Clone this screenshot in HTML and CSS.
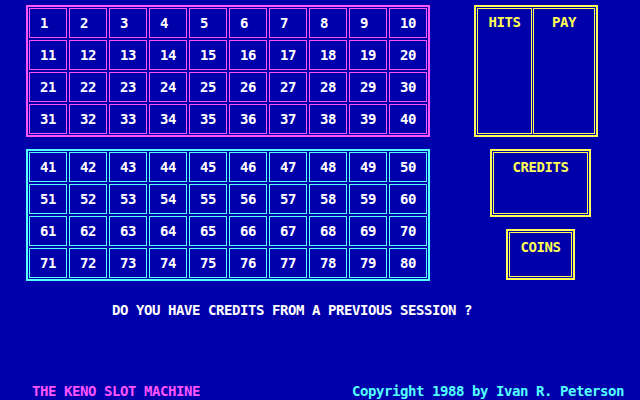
FILE: index.html
```html
<!DOCTYPE html>
<html>
<head>
<meta charset="utf-8">
<link rel="stylesheet" href="styles.css">
</head>
<body>
<div class="screen">
  <div class="top">
    <div class="boards">
      <div class="board board-pink">
        <div class="cell">1</div><div class="cell">2</div><div class="cell">3</div><div class="cell">4</div><div class="cell">5</div><div class="cell">6</div><div class="cell">7</div><div class="cell">8</div><div class="cell">9</div><div class="cell">10</div>
        <div class="cell">11</div><div class="cell">12</div><div class="cell">13</div><div class="cell">14</div><div class="cell">15</div><div class="cell">16</div><div class="cell">17</div><div class="cell">18</div><div class="cell">19</div><div class="cell">20</div>
        <div class="cell">21</div><div class="cell">22</div><div class="cell">23</div><div class="cell">24</div><div class="cell">25</div><div class="cell">26</div><div class="cell">27</div><div class="cell">28</div><div class="cell">29</div><div class="cell">30</div>
        <div class="cell">31</div><div class="cell">32</div><div class="cell">33</div><div class="cell">34</div><div class="cell">35</div><div class="cell">36</div><div class="cell">37</div><div class="cell">38</div><div class="cell">39</div><div class="cell">40</div>
      </div>
      <div class="board board-cyan">
        <div class="cell">41</div><div class="cell">42</div><div class="cell">43</div><div class="cell">44</div><div class="cell">45</div><div class="cell">46</div><div class="cell">47</div><div class="cell">48</div><div class="cell">49</div><div class="cell">50</div>
        <div class="cell">51</div><div class="cell">52</div><div class="cell">53</div><div class="cell">54</div><div class="cell">55</div><div class="cell">56</div><div class="cell">57</div><div class="cell">58</div><div class="cell">59</div><div class="cell">60</div>
        <div class="cell">61</div><div class="cell">62</div><div class="cell">63</div><div class="cell">64</div><div class="cell">65</div><div class="cell">66</div><div class="cell">67</div><div class="cell">68</div><div class="cell">69</div><div class="cell">70</div>
        <div class="cell">71</div><div class="cell">72</div><div class="cell">73</div><div class="cell">74</div><div class="cell">75</div><div class="cell">76</div><div class="cell">77</div><div class="cell">78</div><div class="cell">79</div><div class="cell">80</div>
      </div>
    </div>
    <div class="side">
      <div class="box hits-box">
        <div class="inner hits">HITS</div>
        <div class="inner pay">PAY</div>
      </div>
      <div class="box credits-box">
        <div class="inner">CREDITS</div>
      </div>
      <div class="box coins-box">
        <div class="inner">COINS</div>
      </div>
    </div>
  </div>
  <div class="question">DO YOU HAVE CREDITS FROM A PREVIOUS SESSION ?</div>
  <div class="footer">
    <span class="title">THE KENO SLOT MACHINE</span>
    <span class="copyright">Copyright 1988 by Ivan R. Peterson</span>
  </div>
</div>
</body>
</html>
```
FILE: styles.css
```css
html, body {
  margin: 0;
  padding: 0;
  background: #0000aa;
}
.screen {
  width: 640px;
  height: 400px;
  display: flex;
  flex-direction: column;
  font-family: "DejaVu Sans Mono", "Liberation Mono", monospace;
  font-weight: bold;
  font-size: 14px;
  letter-spacing: -0.43px;
  line-height: 16px;
  color: #ffffff;
  overflow: hidden;
}
.top {
  display: flex;
  padding: 5px 0 0 26px;
}
.boards {
  display: flex;
  flex-direction: column;
  gap: 12px;
}
.board {
  display: grid;
  grid-template-columns: repeat(10, 38px);
  grid-auto-rows: 30px;
  gap: 2px;
  padding: 1px;
  border: 2px solid;
}
.board-pink { border-color: #ff55ff; }
.board-cyan { border-color: #55ffff; }
.cell {
  border: 1px solid;
  display: flex;
  align-items: center;
  padding-left: 10px;
  color: #ffffff;
}
.board-pink .cell { border-color: #ff55ff; }
.board-cyan .cell { border-color: #55ffff; }
.side {
  display: flex;
  flex-direction: column;
  margin-left: 44px;
}
.box {
  border: 2px solid #ffff55;
  padding: 1px;
  display: flex;
  gap: 1px;
  color: #ffff55;
  box-sizing: border-box;
}
.inner {
  border: 1px solid #ffff55;
  flex: 1;
  text-align: center;
}
.hits-box {
  width: 124px;
  height: 132px;
}
.hits-box .inner { padding-top: 5px; }
.hits-box .hits { flex: 0 0 55px; box-sizing: border-box; }
.credits-box {
  width: 101px;
  height: 68px;
  margin: 12px 0 0 16px;
}
.credits-box .inner { padding-top: 6px; }
.coins-box {
  width: 69px;
  height: 51px;
  margin: 12px 0 0 32px;
}
.coins-box .inner { padding-top: 6px; }
.question {
  margin-top: 21px;
  padding-left: 112px;
  color: #ffffff;
}
.footer {
  margin-top: auto;
  padding: 0 16px 1px 32px;
  display: flex;
  justify-content: space-between;
}
.title { color: #ff55ff; }
.copyright { color: #55ffff; }
```
